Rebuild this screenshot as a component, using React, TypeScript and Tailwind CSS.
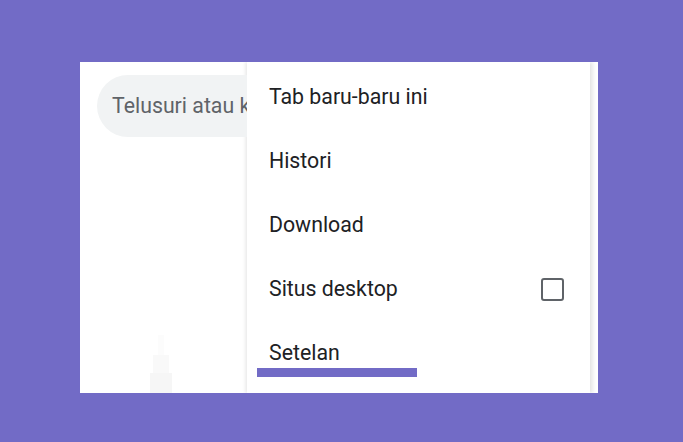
import React from 'react';

const items = ['Tab baru-baru ini', 'Histori', 'Download', 'Situs desktop', 'Setelan'];

export default function App() {
  return (
    <div className="w-[683px] h-[442px] bg-[#726bc6] pt-[62px] pl-[80px] overflow-hidden" style={{ fontFamily: 'Roboto, "Noto Sans", sans-serif' }}>
      <div className="relative w-[518px] h-[331px] bg-white overflow-hidden flex">
        {/* page behind the menu, cut where the menu starts */}
        <div className="relative w-[167px] h-full overflow-hidden shrink-0">
          <div className="pl-[17px] pt-[13px]">
            <div className="w-[300px] h-[62px] rounded-full bg-[#f1f3f4] flex items-center pl-[15px] text-[21.3px] text-[#5f6368] whitespace-nowrap">
              Telusuri atau ketik URL
            </div>
          </div>
          <div className="absolute left-[70px] bottom-0 flex flex-col items-center">
            <div className="w-[6px] h-[20px] bg-[#fcfcfc]" />
            <div className="w-[16px] h-[18px] bg-[#f9f9f9]" />
            <div className="w-[22px] h-[20px] bg-[#f6f6f6]" />
          </div>
        </div>

        {/* overflow menu */}
        <div className="w-[343px] h-full bg-white pt-[3px] shadow-[-2px_0_3px_rgba(0,0,0,0.08),3px_0_4px_rgba(0,0,0,0.1)]">
          {items.map((label) => (
            <div key={label} className="h-[64px] flex items-center justify-between pl-[22px] pr-[26px] text-[21.3px] text-[#202124]">
              <span>{label}</span>
              {label === 'Situs desktop' && (
                <span className="w-[23px] h-[23px] border-[2.5px] border-[#5f6368] rounded-[3px]" />
              )}
            </div>
          ))}
        </div>

        {/* highlight underline */}
        <div className="absolute left-[177px] top-[306px] w-[160px] h-[9px] bg-[#726bc6]" />
      </div>
    </div>
  );
}
